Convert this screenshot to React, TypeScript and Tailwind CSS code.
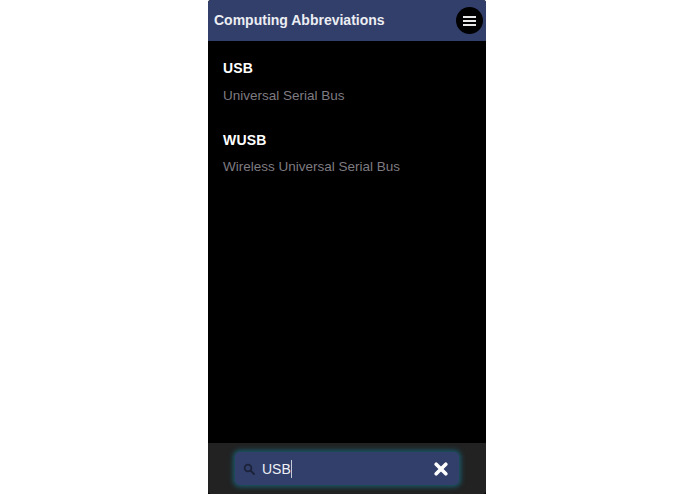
import React from 'react';

const abbreviations = [
  { short: 'USB', long: 'Universal Serial Bus', gap: 'mt-[10px]' },
  { short: 'WUSB', long: 'Wireless Universal Serial Bus', gap: 'mt-[9px]' },
];

export default function App() {
  return (
    <div className="flex h-[494px] w-[695px] overflow-hidden bg-white pl-[208px] font-['Liberation_Sans',Arial,sans-serif]">
      <div className="flex w-[278px] flex-col overflow-hidden rounded-t-[3px] bg-black">
        <header className="flex h-[41px] items-center justify-between bg-[#323f6b] pl-[6px] pr-[3px]">
          <h1 className="text-[14px] font-bold text-[#eceef3]">Computing Abbreviations</h1>
          <button className="flex h-[27px] w-[27px] flex-col items-center justify-center gap-[2px] rounded-full bg-black">
            <span className="h-[2px] w-[13px] bg-[#e8e8e8]" />
            <span className="h-[2px] w-[13px] bg-[#e8e8e8]" />
            <span className="h-[2px] w-[13px] bg-[#e8e8e8]" />
          </button>
        </header>

        <main className="flex-1 px-[15px] pt-[18px]">
          {abbreviations.map((a) => (
            <div key={a.short} className="mb-[26px] h-[46px]">
              <div className="text-[14px] font-bold leading-[18px] tracking-[0.2px] text-white">{a.short}</div>
              <div className={`${a.gap} text-[13.5px] leading-[18px] text-[#7f7b82]`}>{a.long}</div>
            </div>
          ))}
        </main>

        <footer className="flex h-[51px] items-center justify-center rounded-b-[3px] bg-[#222222]">
          <div className="flex h-[33px] w-[224px] items-center rounded-[5px] bg-[#323f6b] pl-[8px] pr-[11px] shadow-[0_0_5px_2px_#1a5a6c]">
            <svg width="12" height="12" viewBox="0 0 12 12" fill="none" stroke="#1b2238" strokeWidth="1.8">
              <circle cx="5" cy="5" r="3.4" />
              <path d="M7.6 7.6 11 11" strokeLinecap="round" />
            </svg>
            <span className="ml-[7px] text-[14px] leading-[18px] text-[#eef0f6]">USB</span>
            <span className="h-[18px] w-px bg-[#c5cad8]" />
            <svg className="ml-auto" width="14" height="14" viewBox="0 0 14 14" stroke="#ffffff" strokeWidth="3.6" strokeLinecap="round">
              <path d="M2.2 2.2 11.8 11.8M11.8 2.2 2.2 11.8" />
            </svg>
          </div>
        </footer>
      </div>
    </div>
  );
}
